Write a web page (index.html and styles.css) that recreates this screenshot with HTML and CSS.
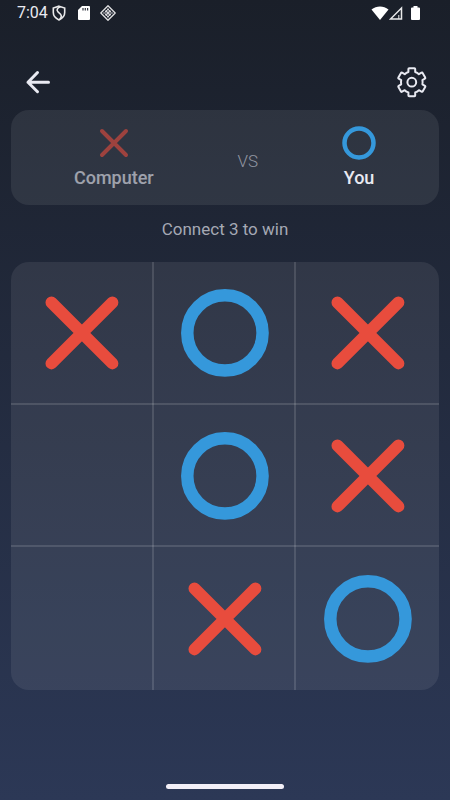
FILE: index.html
```html
<!DOCTYPE html>
<html lang="en">
<head>
<meta charset="utf-8">
<meta name="viewport" content="width=device-width, initial-scale=1">
<title>Tic Tac Toe</title>
<link rel="stylesheet" href="styles.css">
</head>
<body>
<svg class="symbols" aria-hidden="true">
  <symbol id="mark-x" viewBox="0 0 100 100"><path d="M19.500 19.500l61 61M80.500 19.500l-61 61" fill="none" stroke="#e84c3d" stroke-width="12" stroke-linecap="round"/></symbol>
  <symbol id="mark-o" viewBox="0 0 100 100"><circle cx="50" cy="50" r="37.700" fill="none" stroke="#3598db" stroke-width="12.500"/></symbol>
</svg>
<div class="status">
  <div class="status-group">
    <span class="clock">7:04</span>
    <svg class="shield" width="14" height="16" viewBox="0 0 14 16"><path d="M7 1.200L12.700 3v4.500c0 3.400-2.400 5.900-5.700 7.400-3.300-1.500-5.700-4-5.700-7.400V3z" fill="none" stroke="#e9e9ea" stroke-width="1.600"/><path d="M8.500 1.800C5 3 4.300 5.200 6 6.800l2.500 2.400c1.300 1.500 1 3.600-.8 5" fill="none" stroke="#e9e9ea" stroke-width="1.600"/></svg>
    <svg class="card" width="12" height="14" viewBox="0 0 12 14"><path d="M4 0h7a1 1 0 0 1 1 1v12a1 1 0 0 1-1 1H1a1 1 0 0 1-1-1V4z" fill="#fff"/><path d="M5 2v2.500M7.300 2v2.500M9.600 2v2.500" stroke="#30343e" stroke-width="1.200"/></svg>
    <svg class="diamond" width="16" height="16" viewBox="0 0 16 16"><path d="M8 .8L15.200 8 8 15.200.8 8z" fill="none" stroke="#e0e0e2" stroke-width="1.300" stroke-linejoin="round"/><path d="M8 3.200v9.600M3.200 8h9.600M5.600 5.600l4.800 4.800M10.400 5.600l-4.800 4.800M5 7l3-3 3 3M5 9l3 3 3-3" fill="none" stroke="#d4d4d8" stroke-width="1"/></svg>
  </div>
  <div class="status-group">
    <svg width="18" height="14" viewBox="0 0 18 14"><path d="M.5 3.600C5.500-.6 12.500-.6 17.500 3.600L9 14z" fill="#fff"/></svg>
    <svg width="14" height="14" viewBox="0 0 14 14"><path d="M12.500 2v11h-11z" fill="none" stroke="#e9e9ea" stroke-width="1.500"/><path d="M9.800 9v4" stroke="#e9e9ea"/></svg>
    <svg class="battery" width="9" height="14" viewBox="0 0 9 14"><path d="M2.500 0h4v1.500H8a1 1 0 0 1 1 1V13a1 1 0 0 1-1 1H1a1 1 0 0 1-1-1V2.500a1 1 0 0 1 1-1h1.500z" fill="#fff"/></svg>
  </div>
</div>
<header class="toolbar">
  <button class="icon-button" aria-label="Back"><svg width="32" height="32" viewBox="0 0 32 32"><path d="M26.500 16.200H6M15.500 6.500L6 16.200l9.500 9.500" fill="none" stroke="#e9eaf2" stroke-width="3" stroke-linecap="round" stroke-linejoin="round"/></svg></button>
  <button class="icon-button" aria-label="Settings"><svg width="32" height="32" viewBox="0 0 32 32"><g fill="none" stroke="#e9eaf2" stroke-width="2" stroke-linejoin="round"><path d="M13.200 2.200h5.200q.8 0 .8.800v3a10 10 0 0 1 3.700 2.200l2.600-1.500q.7-.4 1.100.3l2.600 4.500q.4.700-.3 1.100l-2.500 1.500a10 10 0 0 1 0 4.200l2.500 1.500q.7.400.3 1.100l-2.600 4.500q-.4.700-1.100.3l-2.600-1.500a10 10 0 0 1-3.700 2.200v3q0 .8-.8.800h-5.200q-.8 0-.8-.8v-3a10 10 0 0 1-3.700-2.200l-2.600 1.500q-.7.400-1.100-.3l-2.600-4.500q-.4-.7.300-1.100l2.500-1.500a10 10 0 0 1 0-4.200l-2.500-1.500q-.7-.4-.3-1.100l2.600-4.500q.4-.7 1.100-.3l2.600 1.500a10 10 0 0 1 3.700-2.200v-3q0-.8.800-.8z"/><circle cx="15.800" cy="16.200" r="4.400"/></g></svg></button>
</header>
<main>
  <section class="players">
    <div class="player waiting"><svg class="player-mark" viewBox="0 0 34 34"><path d="M5 5l24 24M29 5L5 29" fill="none" stroke="#e84c3d" stroke-width="4" stroke-linecap="round"/></svg><span>Computer</span></div>
    <span class="versus">VS</span>
    <div class="player"><svg class="player-mark" viewBox="0 0 34 34"><circle cx="17" cy="17" r="14.500" fill="none" stroke="#3598db" stroke-width="4.500"/></svg><span>You</span></div>
  </section>
  <p class="goal">Connect 3 to win</p>
  <section class="board" aria-label="Board">
    <button class="cell" aria-label="X"><svg class="mark"><use href="#mark-x"/></svg></button>
    <button class="cell" aria-label="O"><svg class="mark"><use href="#mark-o"/></svg></button>
    <button class="cell" aria-label="X"><svg class="mark"><use href="#mark-x"/></svg></button>
    <button class="cell" aria-label="Empty"></button>
    <button class="cell" aria-label="O"><svg class="mark"><use href="#mark-o"/></svg></button>
    <button class="cell" aria-label="X"><svg class="mark"><use href="#mark-x"/></svg></button>
    <button class="cell" aria-label="Empty"></button>
    <button class="cell" aria-label="X"><svg class="mark"><use href="#mark-x"/></svg></button>
    <button class="cell" aria-label="O"><svg class="mark"><use href="#mark-o"/></svg></button>
  </section>
</main>
<footer class="home"><div class="home-bar"></div></footer>
</body>
</html>
```
FILE: styles.css
```css
* {
  box-sizing: border-box;
}

body {
  margin: 0;
  min-height: 100vh;
  display: flex;
  flex-direction: column;
  font-family: Roboto, sans-serif;
  color: #e9eaf2;
  background: linear-gradient(#1a1f29, #2c3856);
}

button {
  padding: 0;
  border: 0;
  background: none;
  color: inherit;
}

svg {
  display: block;
}

.symbols {
  position: absolute;
  width: 0;
  height: 0;
}

.status {
  height: 26px;
  padding: 0 30px 0 17px;
  display: flex;
  justify-content: space-between;
  align-items: center;
}

.status-group {
  display: flex;
  align-items: center;
}

.clock {
  font-size: 16px;
  line-height: 26px;
}

.shield {
  margin-left: 4px;
}

.card {
  margin-left: 12px;
}

.diamond {
  margin-left: 10px;
}

.battery {
  margin-left: 8px;
}

.toolbar {
  padding: 40px 22px 12px;
  display: flex;
  justify-content: space-between;
}

main {
  padding: 0 11px;
}

.players {
  height: 95px;
  padding: 0 21px 2px;
  border-radius: 18px;
  background: rgba(255, 255, 255, 0.08);
  display: flex;
  justify-content: space-around;
  align-items: center;
}

.player {
  display: flex;
  flex-direction: column;
  align-items: center;
  gap: 8px;
  font-size: 18px;
  line-height: 20px;
  font-weight: 500;
}

.player-mark {
  width: 34px;
  height: 34px;
}

.waiting {
  opacity: 0.6;
}

.versus {
  padding-top: 8px;
  font-size: 17px;
  line-height: 20px;
  font-weight: 300;
  color: #9094a0;
}

.goal {
  margin: 14px 0 23px;
  text-align: center;
  font-size: 17px;
  line-height: 20px;
  color: #a5a9b4;
}

.board {
  display: grid;
  grid-template: repeat(3, minmax(0, 1fr)) / repeat(3, minmax(0, 1fr));
  aspect-ratio: 1;
  border-radius: 18px;
  overflow: hidden;
  background: rgba(255, 255, 255, 0.08);
}

.cell {
  position: relative;
  display: flex;
  justify-content: center;
  align-items: center;
}

.cell:not(:nth-child(3n))::before,
.cell:nth-child(-n + 6)::after {
  content: "";
  position: absolute;
  right: 0;
  bottom: 0;
  background: rgba(255, 255, 255, 0.13);
}

.cell::before {
  top: 0;
  width: 2px;
}

.cell::after {
  left: 0;
  height: 2px;
}

.mark {
  width: 70%;
  height: 70%;
}

.home {
  margin-top: auto;
  padding-bottom: 11px;
}

.home-bar {
  width: 118px;
  height: 5px;
  margin: 0 auto;
  border-radius: 3px;
  background: #f2eff7;
}
```
